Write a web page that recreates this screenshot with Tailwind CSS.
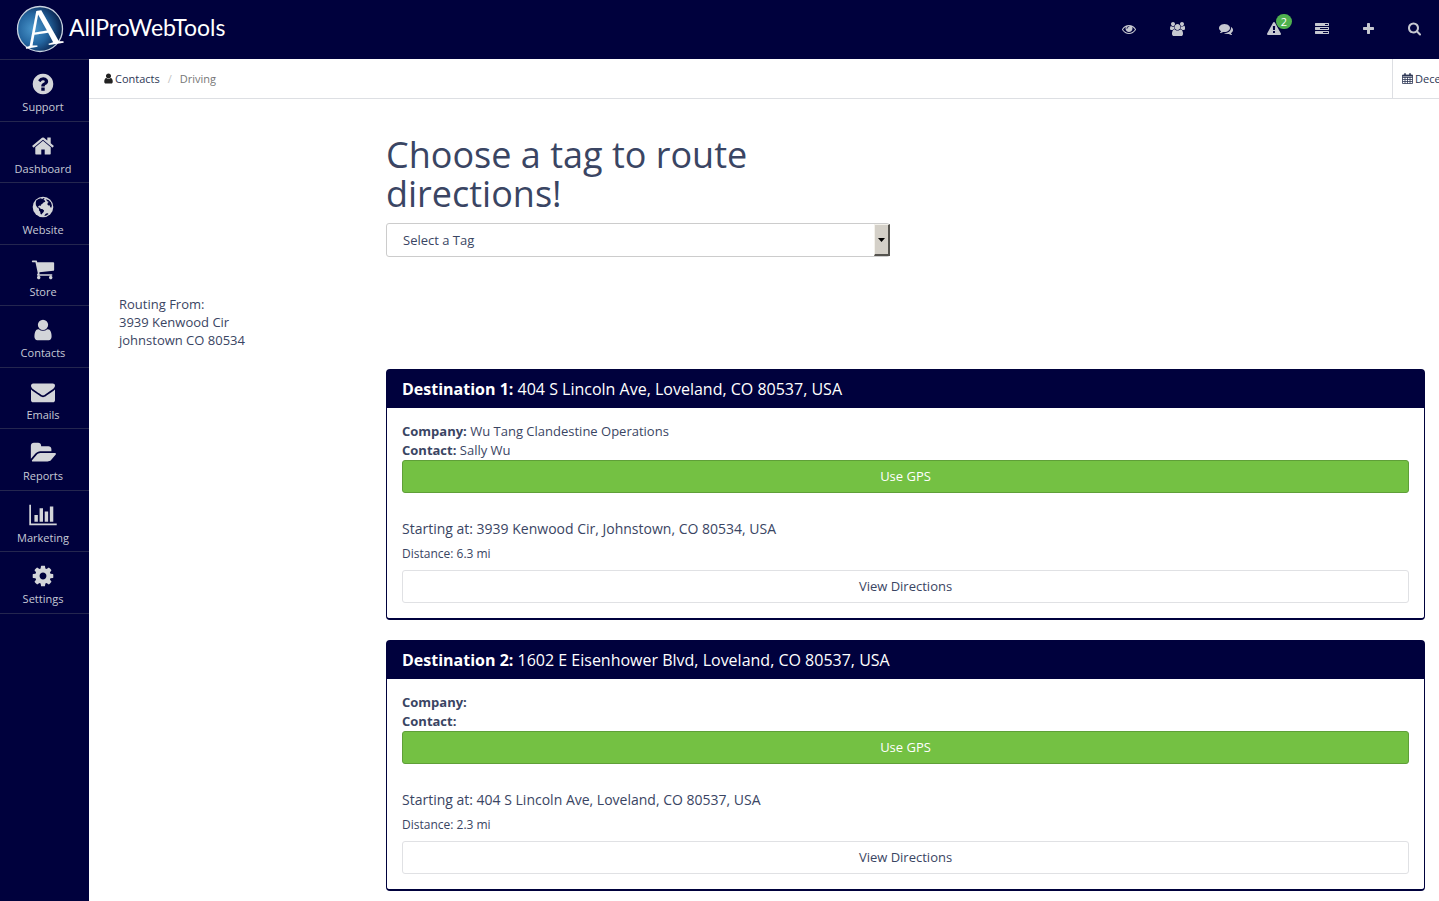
<!DOCTYPE html>
<html lang="en">
<head>
  <meta charset="UTF-8">
  <meta name="viewport" content="width=device-width, initial-scale=1.0">
  <title>AllProWebTools - Driving</title>
  <script src="https://cdn.jsdelivr.net/npm/@tailwindcss/browser@4"></script>
</head>
<body class="flex min-h-screen flex-col overflow-x-hidden bg-white font-['Open_Sans',sans-serif] text-[13px] leading-[19px] text-[#3a4563]">

<!-- Top bar -->
<header class="flex h-[59px] items-center justify-between bg-[#00013d] pb-[2px] pl-4 pr-[18px]">
  <a href="#" class="flex items-center gap-[5px] text-white">
    <svg class="size-[48px]" viewBox="0 0 48 48" aria-hidden="true">
      <defs>
        <radialGradient id="orb" cx="35%" cy="50%" r="62%">
          <stop offset="0" stop-color="#4a97cc"/>
          <stop offset="0.55" stop-color="#24659f"/>
          <stop offset="1" stop-color="#0a2450"/>
        </radialGradient>
      </defs>
      <circle cx="24" cy="24" r="22.5" fill="url(#orb)" stroke="#c9d3e0" stroke-width="1.3"/>
      <text x="26" y="41" text-anchor="middle" font-family="Liberation Serif, serif" font-size="54" fill="#fff" transform="rotate(-9 26 24)">A</text>
    </svg>
    <span class="pb-1 font-['Lato',sans-serif] text-[23px] leading-8">AllProWebTools</span>
  </a>
  <nav class="flex items-center gap-[34px] text-[#c6c8d0]">
    <a href="#" aria-label="View"><svg class="h-[14px] w-[14px]" viewBox="0 0 1792 1792" fill="currentColor"><path d="M1664 960q-152-236-381-353 61 104 61 225 0 185-131.5 316.5t-316.5 131.5-316.5-131.5-131.5-316.5q0-121 61-225-229 117-381 353 133 205 333.5 326.5t434.5 121.5 434.5-121.5 333.5-326.5zm-720-384q0-20-14-34t-34-14q-125 0-214.5 89.5t-89.5 214.5q0 20 14 34t34 14 34-14 14-34q0-86 61-147t147-61q20 0 34-14t14-34zm848 384q0 34-20 69-140 230-376.5 368.5t-499.5 138.5-499.5-139-376.5-368q-20-35-20-69t20-69q140-229 376.5-368t499.5-139 499.5 139 376.5 368q20 35 20 69z"/></svg></a>
    <a href="#" aria-label="Users"><svg class="h-[14px] w-[15px]" viewBox="64 0 1920 1792" fill="currentColor"><path d="M657 896q-162 5-265 128h-134q-82 0-138-40.5t-56-118.5q0-353 124-353 6 0 43.5 21t97.5 42.5 119 21.5q67 0 133-23-5 37-5 66 0 159 90 283zm1071 637q0 120-73 189.5t-194 69.5h-874q-121 0-194-69.5t-73-189.5q0-53 3.5-103.5t14-109 26.5-108.5 43-97.5 62-81 85.5-53.5 111.5-20q10 0 43 21.5t73 48 107 48 135 21.5 135-21.5 107-48 73-48 43-21.5q61 0 111.5 20t85.5 53.5 62 81 43 97.5 26.5 108.5 14 109 3.5 103.5zm-1024-1277q0 106-75 181t-181 75-181-75-75-181 75-181 181-75 181 75 75 181zm704 384q0 159-112.5 271.5t-271.5 112.5-271.5-112.5-112.5-271.5 112.5-271.5 271.5-112.5 271.5 112.5 112.5 271.5zm576 225q0 78-56 118.5t-138 40.5h-134q-103-123-265-128 90-124 90-283 0-29-5-66 66 23 133 23 59 0 119-21.5t97.5-42.5 43.5-21q124 0 124 353zm-128-609q0 106-75 181t-181 75-181-75-75-181 75-181 181-75 181 75 75 181z"/></svg></a>
    <a href="#" aria-label="Comments"><svg class="h-[14px] w-[14px]" viewBox="0 0 1792 1792" fill="currentColor"><path d="M1408 768q0 139-94 257t-256.5 186.5-353.5 68.5q-86 0-176-16-124 88-278 128-36 9-86 16h-3q-11 0-20.5-8t-11.5-21q-1-3-1-6.5t.5-6.5 2-6l2.5-5 3.5-5.5 4-5 4.5-5 4-4.5q5-6 23-25t26-29.5 22.5-29 25-38.5 20.5-44q-124-72-195-177t-71-224q0-139 94-257t256.5-186.5 353.5-68.5 353.5 68.5 256.5 186.5 94 257zm384 256q0 120-71 224.5t-195 176.5q10 24 20.5 44t25 38.5 22.5 29 26 29.5 23 25q1 1 4 4.5t4.5 5 4 5 3.5 5.5l2.5 5 2 6 .5 6.5-1 6.5q-3 14-13 22t-22 7q-50-7-86-16-154-40-278-128-90 16-176 16-271 0-472-132 58 4 88 4 161 0 309-45t264-129q125-92 192-212t67-254q0-77-23-152 129 71 204 178t75 230z"/></svg></a>
    <a href="#" aria-label="Alerts" class="relative"><svg class="h-[14px] w-[14px]" viewBox="0 0 1792 1792" fill="currentColor"><path d="M1024 1375v-190q0-14-9.5-23.5t-22.5-9.5h-192q-13 0-22.5 9.5t-9.5 23.5v190q0 14 9.5 23.5t22.5 9.5h192q13 0 22.5-9.5t9.5-23.5zm-2-374l18-459q0-12-10-19-13-11-24-11h-220q-11 0-24 11-10 7-10 21l17 457q0 10 10 16.5t24 6.5h185q14 0 23.5-6.5t10.5-16.5zm-14-934l768 1408q35 63-2 126-17 29-46.5 46t-63.5 17h-1536q-34 0-63.5-17t-46.5-46q-37-63-2-126l768-1408q17-31 47-49t65-18 65 18 47 49z"/></svg>
      <span class="absolute -top-2 left-[9px] flex h-[15px] w-4 items-center justify-center rounded-full bg-[#4fb04f] text-[11px] leading-none text-white">2</span>
    </a>
    <a href="#" aria-label="Tasks"><svg class="h-[14px] w-[14px]" viewBox="0 0 1792 1792" fill="currentColor"><path d="M1024 1408h640v-128h-640v128zm-384-512h1024v-128h-1024v128zm640-512h384v-128h-384v128zm512 832v256q0 26-19 45t-45 19h-1664q-26 0-45-19t-19-45v-256q0-26 19-45t45-19h1664q26 0 45 19t19 45zm0-512v256q0 26-19 45t-45 19h-1664q-26 0-45-19t-19-45v-256q0-26 19-45t45-19h1664q26 0 45 19t19 45zm0-512v256q0 26-19 45t-45 19h-1664q-26 0-45-19t-19-45v-256q0-26 19-45t45-19h1664q26 0 45 19t19 45z"/></svg></a>
    <a href="#" aria-label="Add"><svg class="h-[14px] w-[11px]" viewBox="192 0 1408 1792" fill="currentColor"><path d="M1600 736v192q0 40-28 68t-68 28h-416v416q0 40-28 68t-68 28h-192q-40 0-68-28t-28-68v-416h-416q-40 0-68-28t-28-68v-192q0-40 28-68t68-28h416v-416q0-40 28-68t68-28h192q40 0 68 28t28 68v416h416q40 0 68 28t28 68z"/></svg></a>
    <a href="#" aria-label="Search"><svg class="h-[14px] w-[13px]" viewBox="64 64 1664 1792" fill="currentColor"><path d="M1216 832q0-185-131.5-316.5t-316.5-131.5-316.5 131.5-131.5 316.5 131.5 316.5 316.5 131.5 316.5-131.5 131.5-316.5zm512 832q0 52-38 90t-90 38q-54 0-90-38l-343-342q-179 124-399 124-143 0-273.5-55.5t-225-150-150-225-55.5-273.5 55.5-273.5 150-225 225-150 273.5-55.5 273.5 55.5 225 150 150 225 55.5 273.5q0 220-124 399l343 343q37 37 37 90z"/></svg></a>
  </nav>
</header>

<div class="flex flex-1">
  <!-- Sidebar -->
  <aside class="w-[89px] shrink-0 bg-[#00013d] text-[11px] leading-4 text-[#c6cad6]">
    <nav class="grid h-[555px] auto-rows-fr border-t border-[#24264f]">
      <a href="#" class="flex flex-col items-center border-b border-[#24264f] pr-[3px] pt-3">
        <svg class="h-6 w-6" viewBox="0 0 1792 1792" fill="#d3d5d9"><path d="M1024 1376v-192q0-14-9-23t-23-9h-192q-14 0-23 9t-9 23v192q0 14 9 23t23 9h192q14 0 23-9t9-23zm256-672q0-88-55.5-163t-138.5-116-170-41q-243 0-371 213-15 24 8 42l132 100q7 6 19 6 16 0 25-12 53-68 86-92 34-24 86-24 48 0 85.5 26t37.5 59q0 38-20 61t-68 45q-63 28-115.5 86.5t-52.5 125.5v36q0 14 9 23t23 9h192q14 0 23-9t9-23q0-19 21.5-49.5t54.5-49.5q32-18 49-28.5t46-35 44.5-48 28-60.5 12.5-81zm384 192q0 209-103 385.5t-279.5 279.5-385.5 103-385.5-103-279.5-279.5-103-385.5 103-385.5 279.5-279.5 385.5-103 385.5 103 279.5 279.5 103 385.5z"/></svg>
        <span class="pt-[3px]">Support</span>
      </a>
      <a href="#" class="flex flex-col items-center border-b border-[#24264f] pr-[3px] pt-3">
        <svg class="h-6 w-6" viewBox="0 0 1792 1792" fill="#d3d5d9"><path d="M1472 992v480q0 26-19 45t-45 19h-384v-384h-256v384h-384q-26 0-45-19t-19-45v-480q0-1 .5-3t.5-3l575-474 575 474q1 2 1 6zm223-69l-62 74q-8 9-21 11h-3q-13 0-21-7l-692-577-692 577q-12 8-24 7-13-2-21-11l-62-74q-8-10-7-23.5t11-21.5l719-599q32-26 76-26t76 26l244 204v-195q0-14 9-23t23-9h192q14 0 23 9t9 23v408l219 182q10 8 11 21.5t-7 23.5z"/></svg>
        <span class="pt-[3px]">Dashboard</span>
      </a>
      <a href="#" class="flex flex-col items-center border-b border-[#24264f] pr-[3px] pt-3">
        <svg class="h-6 w-6" viewBox="0 0 24 24">
          <circle cx="12" cy="12" r="10.3" fill="#d3d5d9"/>
          <path fill="#00013d" d="M5.200 5.600 7.500 3.900l2.400-.7 1.200.8 1.600-.9 1 .6-1.300 1.200 1.300.3.6 1.500-1.800.9-1.400 1.500-1.300.7.1 1.200-1.200-.5-1.500.7.3 1.300 1.400.2.8 1.300 1.600.1 1.800 1.500-.5 1.500-1.400 1.300-.6 1-1-.5-.4-2.100-1.300-1.500.2-1.600-1.800-1.300-1.400-2.200-.2-2.300zM14.600 4.200l3 .7 2.400 2.700.9 2.900-.6 2.200-1-.5-.7-1.900-1.300.2-1-1.300.6-1.600 1-.7-1.700-.6-.7-1zM13.500 20.200l1.500-1.700 1.800-.3.7.8-1.700 1.300-2 .6z"/>
        </svg>
        <span class="pt-[3px]">Website</span>
      </a>
      <a href="#" class="flex flex-col items-center border-b border-[#24264f] pr-[3px] pt-3">
        <svg class="h-6 w-6" viewBox="0 0 1792 1792" fill="#d3d5d9"><path d="M704 1536q0 52-38 90t-90 38-90-38-38-90 38-90 90-38 90 38 38 90zm896 0q0 52-38 90t-90 38-90-38-38-90 38-90 90-38 90 38 38 90zm128-1088v512q0 24-16.500 42.500t-40.500 21.500l-1044 122q13 60 13 70 0 16-24 64h920q26 0 45 19t19 45-19 45-45 19h-1024q-26 0-45-19t-19-45q0-11 8-31.500t16-36 21.500-40 15.500-29.500l-177-823h-204q-26 0-45-19t-19-45 19-45 45-19h256q16 0 28.500 6.500t19.500 15.500 13 24.500 8 26 5.500 29.500 4.500 26h1201q26 0 45 19t19 45z"/></svg>
        <span class="pt-[3px]">Store</span>
      </a>
      <a href="#" class="flex flex-col items-center border-b border-[#24264f] pr-[3px] pt-3">
        <svg class="h-6 w-6" viewBox="0 0 1792 1792" fill="#d3d5d9"><path d="M1536 1399q0 109-62.500 187t-150.500 78h-854q-88 0-150.500-78t-62.500-187q0-85 8.500-160.500t31.500-152 58.500-131 94-89 134.500-34.500q131 128 313 128t313-128q76 0 134.500 34.500t94 89 58.500 131 31.500 152 8.500 160.500zm-256-887q0 159-112.500 271.500t-271.500 112.500-271.500-112.500-112.500-271.500 112.500-271.500 271.500-112.500 271.500 112.500 112.500 271.500z"/></svg>
        <span class="pt-[3px]">Contacts</span>
      </a>
      <a href="#" class="flex flex-col items-center border-b border-[#24264f] pr-[3px] pt-3">
        <svg class="h-6 w-6" viewBox="0 0 1792 1792" fill="#d3d5d9"><path d="M1792 710v794q0 66-47 113t-113 47h-1472q-66 0-113-47t-47-113v-794q44 49 101 87 362 246 497 345 57 42 92.500 65.500t94.500 48 110 24.500h2q51 0 110-24.500t94.500-48 92.500-65.500q170-123 498-345 57-39 100-87zm0-294q0 79-49 151t-122 123q-376 261-468 325-10 7-42.500 31t-54 38.500-52 32.500-57.500 27-50 9h-2q-23 0-50-9t-57.500-27-52-32.500-54-38.500-42.500-31q-91-64-262-182.500t-205-142.500q-62-42-117-115.500t-55-136.500q0-78 41.500-130t118.500-52h1472q65 0 112.500 47t47.500 113z"/></svg>
        <span class="pt-[3px]">Emails</span>
      </a>
      <a href="#" class="flex flex-col items-center border-b border-[#24264f] pr-[3px] pt-3">
        <svg class="h-6 w-[26px]" viewBox="0 0 1944 1792" fill="#d3d5d9"><path d="M1943 952q0 31-31 66l-336 396q-43 51-120.500 86.500t-143.500 35.500h-1088q-34 0-60.500-13t-26.500-43q0-31 31-66l336-396q43-51 120.500-86.500t143.500-35.500h1088q34 0 60.500 13t26.500 43zm-343-344v160h-832q-94 0-197 47.500t-164 119.500l-337 396-5 6q0-4-.5-12.500t-.5-12.500v-960q0-92 66-158t158-66h320q92 0 158 66t66 158v32h544q92 0 158 66t66 158z"/></svg>
        <span class="pt-[3px]">Reports</span>
      </a>
      <a href="#" class="flex flex-col items-center border-b border-[#24264f] pr-[3px] pt-3">
        <svg class="h-6 w-7" viewBox="0 0 2048 1792" fill="#d3d5d9"><path d="M640 896v512h-256v-512h256zm384-512v1024h-256v-1024h256zm1024 1152v128h-2048v-1536h128v1408h1920zm-640-896v768h-256v-768h256zm384-384v1152h-256v-1152h256z"/></svg>
        <span class="pt-[3px]">Marketing</span>
      </a>
      <a href="#" class="flex flex-col items-center border-b border-[#24264f] pr-[3px] pt-3">
        <svg class="h-6 w-6" viewBox="0 0 1792 1792" fill="#d3d5d9"><path d="M1152 896q0-106-75-181t-181-75-181 75-75 181 75 181 181 75 181-75 75-181zm512-109v222q0 12-8 23t-20 13l-185 28q-19 54-39 91 35 50 107 138 10 12 10 25t-9 23q-27 37-99 108t-94 71q-12 0-26-9l-138-108q-44 23-91 38-16 136-29 186-7 28-36 28h-222q-14 0-24.500-8.500t-11.500-21.500l-28-184q-49-16-90-37l-141 107q-10 9-25 9-14 0-25-11-126-114-165-168-7-10-7-23 0-12 8-23 15-21 51-66.500t54-70.500q-27-50-41-99l-183-27q-13-2-21-12.500t-8-23.500v-222q0-12 8-23t19-13l186-28q14-46 39-92-40-57-107-138-10-12-10-24 0-10 9-23 26-36 98.500-107.500t94.500-71.500q13 0 26 10l138 107q44-23 91-38 16-136 29-186 7-28 36-28h222q14 0 24.500 8.500t11.500 21.500l28 184q49 16 90 37l142-107q9-9 24-9 13 0 25 10 129 119 165 170 7 8 7 22 0 12-8 23-15 21-51 66.500t-54 70.500q26 50 41 98l183 28q13 2 21 12.500t8 23.500z"/></svg>
        <span class="pt-[3px]">Settings</span>
      </a>
    </nav>
  </aside>

  <main class="min-w-0 flex-1">
    <!-- Breadcrumb -->
    <div class="flex h-10 items-stretch justify-between border-b border-[#dddfe3] text-[11px]">
      <nav class="flex items-center pl-[15px]">
        <a href="#" class="flex items-center gap-[2px] text-[#2d3755]">
          <svg class="h-[11px] w-[9px]" viewBox="256 64 1280 1664" fill="#222"><path d="M1536 1399q0 109-62.500 187t-150.500 78h-854q-88 0-150.500-78t-62.500-187q0-85 8.500-160.500t31.500-152 58.500-131 94-89 134.500-34.500q131 128 313 128t313-128q76 0 134.500 34.500t94 89 58.500 131 31.500 152 8.500 160.500zm-256-887q0 159-112.500 271.500t-271.500 112.500-271.500-112.500-112.500-271.500 112.500-271.500 271.500-112.500 271.500 112.500 112.500 271.500z"/></svg>
          Contacts
        </a>
        <span class="px-2 text-[#c4c4c4]">/</span>
        <span class="text-[#777]">Driving</span>
      </nav>
      <button type="button" class="flex w-[47px] items-center gap-[2px] whitespace-nowrap border-l border-[#dddfe3] pl-[9px] text-[#2d3755]">
        <svg class="h-[11px] w-[11px] shrink-0" viewBox="0 0 11 11" fill="none" stroke="currentColor" stroke-width="0.8">
          <path d="M.5 2h10v8.500h-10zM.5 4.500h10M.5 6.500h10M.5 8.500h10M3 4v6.500M5.500 4v6.500M8 4v6.500"/>
          <path stroke-width="1.600" d="M3 .3v2.400M8 .3v2.400M.5 2.800h10"/>
        </svg>
        Dece
      </button>
    </div>

    <div class="grid grid-cols-5 pl-[15px]">
      <!-- Tag picker -->
      <div class="col-span-2 col-start-2 px-[15px] pt-9">
        <h1 class="text-[36px] leading-[39px]"><label for="tag">Choose a tag to route directions!</label></h1>
        <div class="relative mt-[10px]">
          <select id="tag" class="h-[34px] w-full appearance-none rounded-[3px] border border-[#ccc] bg-white pl-4 pr-6 text-[13px]">
            <option>Select a Tag</option>
          </select>
          <span class="pointer-events-none absolute inset-y-px right-0 flex w-4 items-center justify-center border border-b-2 border-r-2 border-b-[#55534e] border-l-[#f4f2ec] border-r-[#55534e] border-t-[#f4f2ec] bg-[#d4d0c8]">
            <svg class="h-1 w-[7px]" viewBox="0 0 7 4"><path d="M0 0h7L3.500 4z"/></svg>
          </span>
        </div>
      </div>

      <div class="col-start-1 px-[15px] pt-[38px] leading-[18px]">
        <p>Routing From:</p>
        <p>3939 Kenwood Cir</p>
        <p>johnstown CO 80534</p>
      </div>

      <!-- Destinations -->
      <div class="col-span-4 flex flex-col gap-5 pb-[10px] pl-[15px] pr-[14px] pt-28">
        <section class="rounded border border-b-2 border-[#00013d]">
          <h2 class="bg-[#00013d] px-[15px] py-[9px] text-[16px] leading-5 text-white"><b>Destination 1:</b> 404 S Lincoln Ave, Loveland, CO 80537, USA</h2>
          <div class="px-[15px] pb-[15px] pt-[14px]">
            <p><b>Company:</b> Wu Tang Clandestine Operations</p>
            <p><b>Contact:</b> Sally Wu</p>
            <button type="button" class="h-[33px] w-full rounded-[3px] border border-[#5f9f38] bg-[#74c143] text-white">Use GPS</button>
            <p class="mt-[26px] text-[14px] leading-5">Starting at: 3939 Kenwood Cir, Johnstown, CO 80534, USA</p>
            <p class="mb-[7px] mt-[6px] text-[12px] leading-[18px]">Distance: 6.3 mi</p>
            <button type="button" class="h-[33px] w-full rounded-[3px] border border-[#e0e1e4] bg-white">View Directions</button>
          </div>
        </section>

        <section class="rounded border border-b-2 border-[#00013d]">
          <h2 class="bg-[#00013d] px-[15px] py-[9px] text-[16px] leading-5 text-white"><b>Destination 2:</b> 1602 E Eisenhower Blvd, Loveland, CO 80537, USA</h2>
          <div class="px-[15px] pb-[15px] pt-[14px]">
            <p><b>Company:</b></p>
            <p><b>Contact:</b></p>
            <button type="button" class="h-[33px] w-full rounded-[3px] border border-[#5f9f38] bg-[#74c143] text-white">Use GPS</button>
            <p class="mt-[26px] text-[14px] leading-5">Starting at: 404 S Lincoln Ave, Loveland, CO 80537, USA</p>
            <p class="mb-[7px] mt-[6px] text-[12px] leading-[18px]">Distance: 2.3 mi</p>
            <button type="button" class="h-[33px] w-full rounded-[3px] border border-[#e0e1e4] bg-white">View Directions</button>
          </div>
        </section>
      </div>
    </div>
  </main>
</div>
</body>
</html>
